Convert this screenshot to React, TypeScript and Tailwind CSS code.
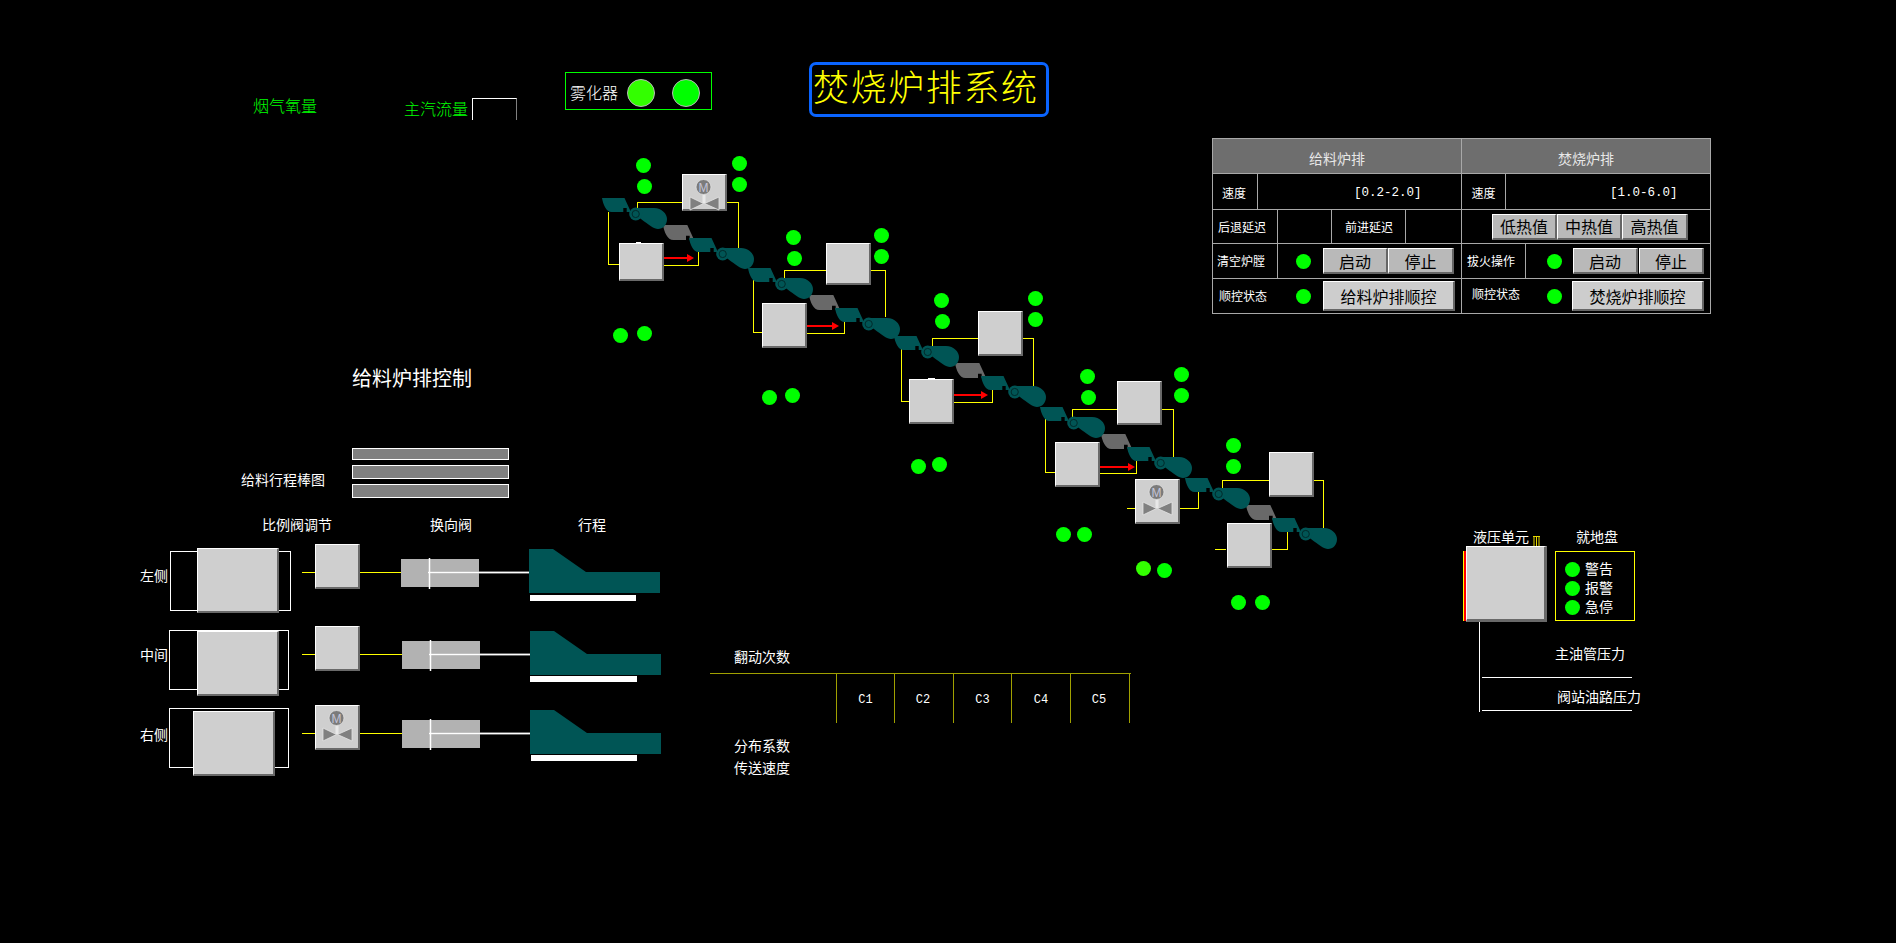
import React from 'react'

const scoops: [number, number][] = [
  [602, 198],
  [748, 268],
  [894, 336],
  [1040, 407],
  [1185, 478],
]

const pipes = [
  // group 1
  '608,212 608,264 619,264',
  '664,265 698,265 698,252',
  '637,208 637,202 682,202',
  '727,202 738,202 738,248',
  // group 2
  '753,280 753,332 762,332',
  '807,333 844,333 844,319',
  '784,280 784,270 826,270',
  '871,270 885,270 885,317',
  // group 3
  '901,349 901,401 909,401',
  '954,402 992,402 992,388',
  '932,346 932,338 978,338',
  '1023,338 1033,338 1033,386',
  // group 4
  '1045,419 1045,472 1055,472',
  '1100,473 1136,473 1136,459',
  '1072,417 1072,409 1117,409',
  '1162,409 1173,409 1173,457',
  // group 5
  '1127,508 1135,508',
  '1180,508 1198,508 1198,490',
  '1222,490 1222,480 1269,480',
  '1314,480 1323,480 1323,528',
  '1215,549 1226,549',
  '1272,549 1287,549 1287,532',
]

const arrows: [number, number, number][] = [
  [664, 258, 694],
  [807, 326, 839],
  [954, 395, 988],
  [1100, 467, 1135],
]

const scoopPath = 'M0 0H22.5L28 12V14H24.7V10H21.3V14H9.7C4 14 1 6 0 0Z'
const fanPath = 'M36 10H52C60 10 65 16 65 21C65 27 61 31 56 31C52 31 47 27 39 21L33 16Z'

function Feeder() {
  return (
    <>
      <path d={scoopPath} fill="#005555" />
      <path d={fanPath} fill="#005555" />
      <circle cx="33.7" cy="16" r="6.5" fill="#005555" />
      <circle cx="33.7" cy="16" r="3.6" fill="#005555" stroke="#002b2b" strokeWidth="1" />
    </>
  )
}

function Conveyor({ x, y }: { x: number; y: number }) {
  return (
    <g transform={`translate(${x} ${y})`}>
      <path d={scoopPath} fill="#696969" transform="translate(61 27) scale(1.08)" />
      <Feeder />
      <g transform="translate(87 40)">
        <Feeder />
      </g>
    </g>
  )
}

function MValve({ className = 'left-0' }: { className?: string }) {
  return (
    <svg viewBox="0 0 45 40" className={`absolute top-0 h-[40px] w-[45px] ${className}`}>
      <path d="M20.5 18H23.5V28H20.5Z" fill="#e8e8e8" />
      <path d="M8 22L21.5 28.5L8 35Z" fill="#808080" stroke="#e4e4e4" strokeWidth="0.8" />
      <path d="M37 22L22.5 28.5L37 35Z" fill="#808080" stroke="#e4e4e4" strokeWidth="0.8" />
      <circle cx="21.5" cy="12" r="7.5" fill="#7b7b7b" stroke="#e0e0e0" strokeWidth="0.8" />
      <text x="21.5" y="16.5" textAnchor="middle" fontSize="12" fill="#c4c4d8" fontFamily="Liberation Sans, sans-serif">
        M
      </text>
    </svg>
  )
}

const bevel =
  'border-t border-l border-r-2 border-b-2 border-t-white border-l-white border-r-[#696969] border-b-[#696969] bg-[#cfcfcf]'

function Box({ className, children }: { className: string; children?: React.ReactNode }) {
  return <div className={`absolute ${bevel} ${className}`}>{children}</div>
}

function Dot({ className = '' }: { className?: string }) {
  return <div className={`h-[15px] w-[15px] shrink-0 rounded-full bg-[#00ff00] ${className}`} />
}

// the two lamps stacked over each grate box
function LampsV({ className, nudge }: { className: string; nudge?: boolean }) {
  return (
    <div className={`absolute flex flex-col gap-[6px] ${className}`}>
      <Dot />
      <Dot className={nudge ? 'ml-px' : ''} />
    </div>
  )
}

function LampsH({ className, children }: { className: string; children: React.ReactNode }) {
  return <div className={`absolute flex ${className}`}>{children}</div>
}

function Label({ className, children }: { className: string; children: React.ReactNode }) {
  return <div className={`absolute whitespace-nowrap leading-none ${className}`}>{children}</div>
}

function Btn({ className, children }: { className: string; children: React.ReactNode }) {
  return (
    <div
      className={`flex items-center justify-center border-t border-l border-r-2 border-b-2 border-t-white border-l-white border-r-[#666666] border-b-[#666666] text-[16px] leading-none text-black ${className}`}
    >
      {children}
    </div>
  )
}

function ControlTable() {
  return (
    <div className="absolute top-[138px] left-[1212px] flex h-[176px] w-[499px] flex-col border border-[#a8a8a8] text-white">
      <div className="flex h-[35px] border-b border-[#a8a8a8] bg-[#6e6e6e] text-[14px] text-[#e8e8e8]">
        <div className="flex w-[249px] items-center justify-center border-r border-[#a8a8a8] pt-[5px]">给料炉排</div>
        <div className="flex flex-1 items-center justify-center pt-[5px]">焚烧炉排</div>
      </div>

      <div className="flex h-[36px] border-b border-[#a8a8a8] text-[12px]">
        <div className="flex w-[249px] border-r border-[#a8a8a8]">
          <div className="flex w-[45px] items-center justify-center border-r border-[#a8a8a8] pt-[2px] pr-[2px]">速度</div>
          <div className="flex items-center pt-[4px] pl-[96px] font-['Liberation_Mono',monospace] text-[12.5px]">[0.2-2.0]</div>
        </div>
        <div className="flex flex-1">
          <div className="flex w-[44px] items-center justify-center border-r border-[#a8a8a8] pt-[2px]">速度</div>
          <div className="flex items-center pt-[4px] pl-[104px] font-['Liberation_Mono',monospace] text-[12.5px]">[1.0-6.0]</div>
        </div>
      </div>

      <div className="flex h-[34px] border-b border-[#a8a8a8] text-[12px]">
        <div className="flex w-[249px] border-r border-[#a8a8a8]">
          <div className="flex w-[65px] items-center border-r border-[#a8a8a8] pl-[5px]">后退延迟</div>
          <div className="w-[54px] border-r border-[#a8a8a8]" />
          <div className="flex w-[74px] items-center border-r border-[#a8a8a8] pl-[13px]">前进延迟</div>
        </div>
        <div className="flex flex-1 items-center pl-[30px]">
          <Btn className="h-[26px] w-[65px] bg-[#b9b9b9]">低热值</Btn>
          <Btn className="h-[26px] w-[65px] bg-[#b9b9b9]">中热值</Btn>
          <Btn className="h-[26px] w-[66px] bg-[#b9b9b9]">高热值</Btn>
        </div>
      </div>

      <div className="flex h-[35px] border-b border-[#a8a8a8] text-[12px]">
        <div className="flex w-[249px] items-center border-r border-[#a8a8a8]">
          <div className="flex h-full w-[65px] items-center border-r border-[#a8a8a8] pl-[4px]">清空炉膛</div>
          <Dot className="ml-[18px]" />
          <Btn className="ml-[12px] h-[26px] w-[65px] bg-[#b9b9b9]">启动</Btn>
          <Btn className="h-[26px] w-[66px] bg-[#b9b9b9]">停止</Btn>
        </div>
        <div className="flex flex-1 items-center">
          <div className="flex h-full w-[64px] items-center border-r border-[#a8a8a8] pl-[5px]">拔火操作</div>
          <Dot className="ml-[21px]" />
          <Btn className="ml-[11px] h-[26px] w-[65px] bg-[#b9b9b9]">启动</Btn>
          <Btn className="ml-px h-[26px] w-[65px] bg-[#b9b9b9]">停止</Btn>
        </div>
      </div>

      <div className="flex flex-1 text-[12px]">
        <div className="flex w-[249px] items-center border-r border-[#a8a8a8]">
          <div className="w-[65px] pl-[6px]">顺控状态</div>
          <Dot className="ml-[18px]" />
          <Btn className="ml-[12px] h-[30px] w-[132px] bg-[#cdcdcd]">给料炉排顺控</Btn>
        </div>
        <div className="flex flex-1 items-center">
          <div className="w-[64px] pb-[4px] pl-[10px]">顺控状态</div>
          <Dot className="ml-[21px]" />
          <Btn className="ml-[10px] h-[30px] w-[132px] bg-[#cdcdcd]">焚烧炉排顺控</Btn>
        </div>
      </div>
    </div>
  )
}

function StrokeDrawing({ barX, barY, className = '' }: { barX: number; barY: number; className?: string }) {
  return (
    <svg viewBox="0 0 262 62" className={`h-[62px] w-[262px] shrink-0 ${className}`}>
      <rect x="0" y="15" width="78" height="28" fill="#b2b2b2" />
      <path d="M27 28.5H128" stroke="#d0d0d0" strokeWidth="2" />
      <path d="M27 28.5H128" stroke="#ffffff" strokeWidth="1" />
      <path d="M28.5 14V45" stroke="#ffffff" strokeWidth="1.5" />
      <polygon points="128,5 152,5 185,28 259,28 259,49 128,49" fill="#005555" />
      <rect x={barX} y={barY} width={235 - barX} height="6" fill="#ffffff" />
    </svg>
  )
}

function ValveRow({
  label,
  rowClass,
  labelClass,
  outlineClass,
  boxClass,
  lineClass,
  motor,
  barX,
  barY,
}: {
  label: string
  rowClass: string
  labelClass: string
  outlineClass: string
  boxClass: string
  lineClass: string
  motor?: boolean
  barX: number
  barY: number
}) {
  return (
    <div className={`flex items-start ${rowClass}`}>
      <div className={`w-[29px] shrink-0 text-[14px] leading-none ${labelClass}`}>{label}</div>
      <div className="relative h-[72px] w-[122px] shrink-0">
        <div className={`absolute h-[60px] border border-white ${outlineClass}`} />
        <Box className={`h-[65px] w-[82px] ${boxClass}`} />
      </div>
      <div className="mt-[28px] ml-[11px] h-px w-[13px] shrink-0 bg-[#ffff00]" />
      <div className={`relative h-[45px] w-[45px] shrink-0 ${bevel}`}>{motor && <MValve className="-left-px" />}</div>
      <div className={`mt-[28px] h-px shrink-0 bg-[#ffff00] ${lineClass}`} />
      <StrokeDrawing barX={barX} barY={barY} />
    </div>
  )
}

export default function App() {
  return (
    <div className="relative h-[943px] w-[1896px] overflow-hidden bg-black font-['Noto_Sans_CJK_SC',sans-serif] text-white">
      {/* pipes and conveyors */}
      <svg className="absolute inset-0 h-[943px] w-[1896px]" viewBox="0 0 1896 943">
        <g fill="none" stroke="#ffff00" strokeWidth="1" shapeRendering="crispEdges">
          {pipes.map((p) => (
            <polyline key={p} points={p} />
          ))}
        </g>
        {scoops.map(([x, y]) => (
          <Conveyor key={x} x={x} y={y} />
        ))}
        {arrows.map(([x0, y, x1]) => (
          <g key={x0} fill="#ff0000">
            <rect x={x0} y={y - 1} width={x1 - x0 - 6} height="2" />
            <path d={`M${x1 - 7} ${y - 4}L${x1} ${y}L${x1 - 7} ${y + 4}Z`} />
          </g>
        ))}
      </svg>

      {/* top row */}
      <Label className="top-[97px] left-[253px] text-[16px] font-light text-[#00ff00]">烟气氧量</Label>
      <Label className="top-[100px] left-[404px] text-[16px] font-light text-[#00ff00]">主汽流量</Label>
      <div className="absolute top-[98px] left-[472px] h-[22px] w-[45px] border-t border-r border-l border-t-white border-r-[#808080] border-l-white" />

      <div className="absolute top-[72px] left-[565px] flex h-[38px] w-[147px] items-center border border-[#00ff00] pl-[4px]">
        <span className="mt-[2px] text-[16px] leading-none font-light whitespace-nowrap">雾化器</span>
        <div className="mt-[4px] ml-[9px] h-[28px] w-[28px] rounded-full border border-[#b8b8b8] bg-[#33ff00]" />
        <div className="mt-[4px] ml-[17px] h-[28px] w-[28px] rounded-full border border-[#b8b8b8] bg-[#00ff00]" />
      </div>

      <div className="absolute top-[62px] left-[809px] flex h-[55px] w-[240px] items-center rounded-[7px] border-[3px] border-[#0a64ff] pb-[10px] pl-[1px] text-[36px] leading-none font-light tracking-[1.6px] whitespace-nowrap text-[#ffff00]">
        焚烧炉排系统
      </div>

      <ControlTable />

      {/* grate boxes */}
      <Box className="top-[174px] left-[682px] h-[37px] w-[45px]">
        <MValve className="-left-px" />
      </Box>
      <Box className="top-[243px] left-[619px] h-[38px] w-[45px]">
        <div className="absolute -top-[2px] left-[16px] h-px w-[5px] bg-white" />
      </Box>
      <Box className="top-[243px] left-[826px] h-[42px] w-[45px]" />
      <Box className="top-[303px] left-[762px] h-[45px] w-[45px]" />
      <Box className="top-[311px] left-[978px] h-[45px] w-[45px]" />
      <Box className="top-[379px] left-[909px] h-[45px] w-[45px]">
        <div className="absolute -top-[2px] left-[18px] h-px w-[7px] bg-white" />
      </Box>
      <Box className="top-[381px] left-[1117px] h-[44px] w-[45px]" />
      <Box className="top-[442px] left-[1055px] h-[45px] w-[45px]" />
      <Box className="top-[479px] left-[1135px] h-[45px] w-[45px]">
        <MValve className="-left-px" />
      </Box>
      <Box className="top-[452px] left-[1269px] h-[45px] w-[45px]" />
      <Box className="top-[523px] left-[1227px] h-[45px] w-[45px]" />

      {/* status lamps */}
      <LampsV className="top-[158px] left-[636px]" nudge />
      <LampsV className="top-[156px] left-[732px]" />
      <LampsV className="top-[230px] left-[786px]" nudge />
      <LampsV className="top-[228px] left-[874px]" />
      <LampsV className="top-[293px] left-[934px]" nudge />
      <LampsV className="top-[291px] left-[1028px]" />
      <LampsV className="top-[369px] left-[1080px]" nudge />
      <LampsV className="top-[367px] left-[1174px]" />
      <LampsV className="top-[438px] left-[1226px]" />
      <LampsH className="top-[326px] left-[613px] gap-[9px]">
        <Dot className="mt-[2px]" />
        <Dot />
      </LampsH>
      <LampsH className="top-[388px] left-[762px] gap-[8px]">
        <Dot className="mt-[2px]" />
        <Dot />
      </LampsH>
      <LampsH className="top-[457px] left-[911px] gap-[6px]">
        <Dot className="mt-[2px]" />
        <Dot />
      </LampsH>
      <LampsH className="top-[527px] left-[1056px] gap-[6px]">
        <Dot />
        <Dot />
      </LampsH>
      <LampsH className="top-[561px] left-[1136px] gap-[6px]">
        <Dot className="bg-[#33ff00]" />
        <Dot className="mt-[2px]" />
      </LampsH>
      <LampsH className="top-[595px] left-[1231px] gap-[9px]">
        <Dot />
        <Dot />
      </LampsH>

      {/* feed grate control */}
      <Label className="top-[368px] left-[352px] text-[20px]">给料炉排控制</Label>
      <div className="absolute top-[448px] left-[241px] flex items-end">
        <div className="mb-[12px] w-[111px] text-[14px] leading-none whitespace-nowrap">给料行程棒图</div>
        <div className="flex flex-col gap-[5px]">
          <div className="h-[12px] w-[157px] border border-white bg-[#808080]" />
          <div className="h-[14px] w-[157px] border border-white bg-[#808080]" />
          <div className="h-[14px] w-[157px] border border-white bg-[#808080]" />
        </div>
      </div>

      <div className="absolute top-[517px] left-[140px] flex w-[530px] flex-col">
        <div className="flex h-[27px] text-[14px] leading-none">
          <div className="ml-[122px] w-[168px]">比例阀调节</div>
          <div className="w-[148px]">换向阀</div>
          <div>行程</div>
        </div>
        <ValveRow
          label="左侧"
          rowClass="h-[82px]"
          labelClass="mt-[24px]"
          outlineClass="top-[7px] left-px w-[121px]"
          boxClass="top-[4px] left-[28px]"
          lineClass="w-[41px]"
          barX={129}
          barY={51}
        />
        <ValveRow
          label="中间"
          rowClass="h-[79px]"
          labelClass="mt-[21px]"
          outlineClass="top-[4px] left-0 w-[120px]"
          boxClass="top-[5px] left-[28px]"
          lineClass="w-[42px]"
          barX={128}
          barY={50}
        />
        <ValveRow
          label="右侧"
          rowClass="h-[72px]"
          labelClass="mt-[22px]"
          outlineClass="top-[3px] left-0 w-[120px]"
          boxClass="top-[6px] left-[24px]"
          lineClass="w-[42px]"
          motor
          barX={129}
          barY={50}
        />
      </div>

      {/* flip counters */}
      <div className="absolute top-[649px] left-[710px] flex w-[421px] flex-col text-[14px] leading-none">
        <div className="h-[24px] pl-[24px]">翻动次数</div>
        <div className="flex h-[50px] border-t border-[#a0a000] pl-[126px] font-['Liberation_Mono',monospace] text-[12px]">
          <div className="flex w-[58px] items-center justify-center border-l border-[#a0a000] pt-[2px]">C1</div>
          <div className="flex w-[59px] items-center justify-center border-l border-[#a0a000] pt-[2px] pr-[2px]">C2</div>
          <div className="flex w-[58px] items-center justify-center border-l border-[#a0a000] pt-[2px]">C3</div>
          <div className="flex w-[59px] items-center justify-center border-l border-[#a0a000] pt-[2px]">C4</div>
          <div className="flex w-[60px] items-center justify-center border-x border-[#a0a000] pt-[2px] pr-[2px]">C5</div>
        </div>
        <div className="flex flex-col gap-[8px] pt-[15px] pl-[24px]">
          <div>分布系数</div>
          <div>传送速度</div>
        </div>
      </div>

      {/* hydraulic unit */}
      <div className="absolute top-[529px] left-[1463px] flex w-[176px] flex-col text-[14px] leading-none whitespace-nowrap">
        <div className="flex h-[17px] pl-[10px]">
          <div className="w-[60px]">液压单元</div>
          <svg viewBox="0 0 7 10" className="mt-[7px] h-[10px] w-[7px] shrink-0">
            <path d="M1 0V10M3.5 0V10M6 0V10M0 .5H7" stroke="#e6d800" strokeWidth="1" fill="none" />
          </svg>
          <div className="ml-[36px]">就地盘</div>
        </div>
        <div className="flex h-[76px]">
          <div className="mt-[5px] h-[70px] w-[3px] border-l border-[#ffff00] bg-[#ff0000]" />
          <div className={`h-[76px] w-[81px] border-r-[3px] border-b-[3px] ${bevel}`} />
          <div className="mt-[5px] ml-[8px] flex h-[70px] w-[80px] flex-col gap-[4px] border border-[#ffff00] pt-[10px] pl-[9px]">
            <div className="flex h-[15px] items-center gap-[5px]">
              <Dot />
              <span className="pb-[3px]">警告</span>
            </div>
            <div className="flex h-[15px] items-center gap-[5px]">
              <Dot />
              <span className="pb-[3px]">报警</span>
            </div>
            <div className="flex h-[15px] items-center gap-[5px]">
              <Dot />
              <span className="pb-[3px]">急停</span>
            </div>
          </div>
        </div>
        <div className="ml-[16px] flex h-[90px] flex-col border-l border-white pl-[2px]">
          <div className="h-[56px] w-[150px] border-b border-white pt-[24px] pl-[73px]">主油管压力</div>
          <div className="h-[33px] w-[150px] border-b border-white pt-[11px] pl-[75px]">阀站油路压力</div>
        </div>
      </div>
    </div>
  )
}
